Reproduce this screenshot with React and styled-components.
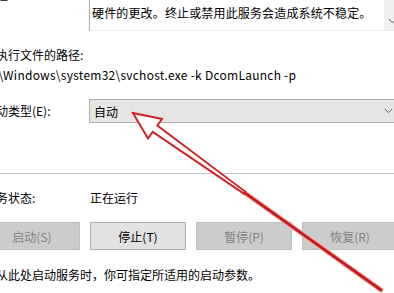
import React from 'react';
import styled, { createGlobalStyle } from 'styled-components';

const GlobalStyle = createGlobalStyle`
  html, body {
    margin: 0;
    padding: 0;
    background: #ffffff;
    overflow: hidden;
  }
  body {
    font-family: "Noto Sans CJK SC", "Noto Sans", sans-serif;
    font-size: 12px;
    color: #000000;
  }
`;

const Page = styled.div`
  position: relative;
  width: 394px;
  height: 293px;
  overflow: hidden;
  background: #ffffff;
`;

const Dialog = styled.div`
  width: 416px;
  margin-left: -16px;
  margin-top: -12px;
  display: flex;
  flex-direction: column;
`;

const FieldRow = styled.div`
  display: grid;
  grid-template-columns: 105px 1fr;
  align-items: ${props => props.align || 'center'};
  margin-top: ${props => props.top || 0}px;
`;

const Label = styled.div`
  line-height: 14px;
  white-space: nowrap;
`;

const TextLine = styled.div`
  line-height: 16px;
  white-space: nowrap;
  margin-top: ${props => props.top || 0}px;
  padding-left: ${props => props.indent || 0}px;
  letter-spacing: ${props => props.spacing || 0}px;
`;

const DescBox = styled.div`
  height: 42px;
  display: flex;
  border-left: 1px solid #a9a9a9;
  border-bottom: 1px solid #eeeeee;
`;

const DescText = styled.div`
  flex: 1;
  padding: 17px 0 0 2px;
  line-height: 16px;
  letter-spacing: 0.15px;
  white-space: nowrap;
  overflow: hidden;
`;

const ScrollBar = styled.div`
  width: 16px;
  background: #f0f0f0;
  display: flex;
  align-items: flex-end;
  justify-content: center;
  padding-bottom: 6px;
  box-sizing: border-box;
`;

const Combo = styled.div`
  height: 24px;
  box-sizing: border-box;
  background: #e5e5e5;
  border: 1px solid #adadad;
  display: flex;
  align-items: center;
  justify-content: space-between;
  padding: 0 6px 0 4px;
`;

const Separator = styled.div`
  height: 1px;
  background: #c4c4c4;
  margin-top: 50px;
`;

const ButtonBar = styled.div`
  display: flex;
  gap: 10px;
  margin-top: 16px;
`;

const Button = styled.div`
  width: 96px;
  height: 28px;
  box-sizing: border-box;
  display: flex;
  align-items: center;
  justify-content: center;
  background: ${props => (props.disabled ? '#cccccc' : '#e1e1e1')};
  border: 1px solid ${props => (props.disabled ? '#bfbfbf' : '#adadad')};
  color: ${props => (props.disabled ? '#838383' : '#000000')};
`;

const Overlay = styled.svg`
  position: absolute;
  left: 0;
  top: 0;
  pointer-events: none;
`;

const Chevron = () => (
  <svg width="9" height="6" viewBox="0 0 9 6">
    <path d="M0.8 1 L4.5 4.6 L8.2 1" fill="none" stroke="#606060" strokeWidth="1" />
  </svg>
);

const App = () => {
  const buttons = [
    { label: '启动(S)', disabled: true },
    { label: '停止(T)', disabled: false },
    { label: '暂停(P)', disabled: true },
    { label: '恢复(R)', disabled: true },
  ];

  return (
    <Page>
      <GlobalStyle />
      <Dialog>
        <FieldRow align="start">
          <Label>描述:</Label>
          <DescBox>
            <DescText>硬件的更改。终止或禁用此服务会造成系统不稳定。</DescText>
            <ScrollBar>
              <Chevron />
            </ScrollBar>
          </DescBox>
        </FieldRow>

        <TextLine top={16}>可执行文件的路径:</TextLine>
        <TextLine top={4} indent={3} spacing={0.25}>C:\Windows\system32\svchost.exe -k DcomLaunch -p</TextLine>

        <FieldRow top={16}>
          <Label>启动类型(E):</Label>
          <Combo>
            <span>自动</span>
            <Chevron />
          </Combo>
        </FieldRow>

        <Separator />

        <FieldRow top={16}>
          <Label>服务状态:</Label>
          <TextLine indent={1}>正在运行</TextLine>
        </FieldRow>

        <ButtonBar>
          {buttons.map(b => (
            <Button key={b.label} disabled={b.disabled}>{b.label}</Button>
          ))}
        </ButtonBar>

        <TextLine top={17} indent={-3}>当从此处启动服务时，你可指定所适用的启动参数。</TextLine>
      </Dialog>

      <Overlay width="394" height="293" viewBox="0 0 394 293">
        <line x1="244.5" y1="192.6" x2="381" y2="290" stroke="#f2a8a8" strokeWidth="4.8" strokeLinecap="round" />
        <line x1="244.5" y1="192.6" x2="381" y2="290" stroke="#c81c1c" strokeWidth="2.8" strokeLinecap="round" />
        <polygon
          points="133,113 162,119 157.3,125.5 245.2,191.6 243.8,193.6 152.7,131.9 148,138.5"
          fill="#ffffff"
          stroke="#d02020"
          strokeWidth="1.9"
          strokeLinejoin="miter"
        />
      </Overlay>
    </Page>
  );
};

export default App;
